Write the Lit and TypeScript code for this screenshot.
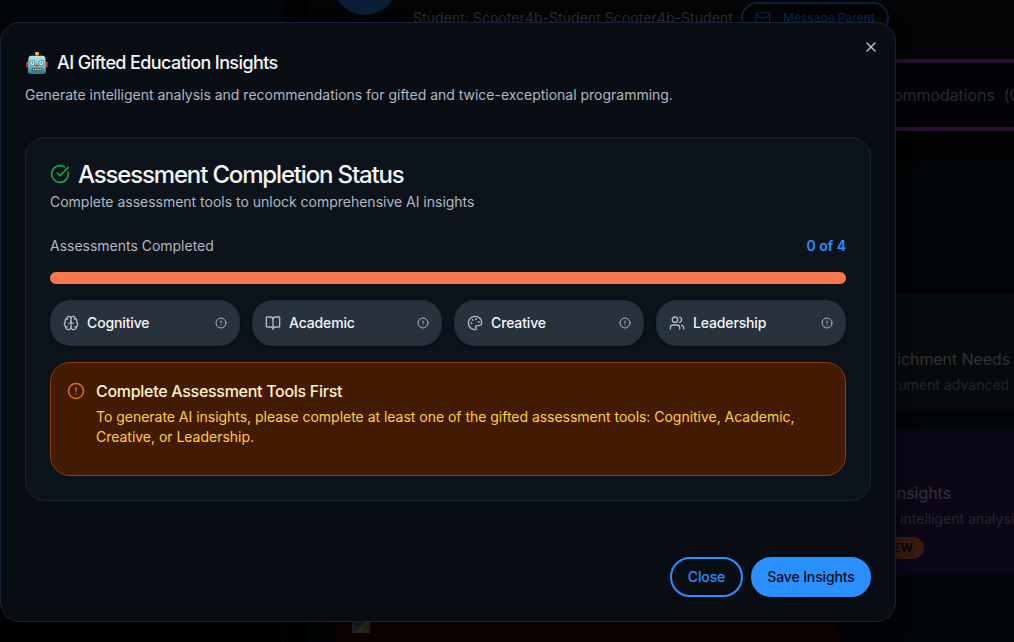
import { LitElement, html, css, svg } from "lit";
import { customElement, property } from "lit/decorators.js";

const ICONS: Record<string, unknown> = {
  check: svg`<path d="M21.801 10A10 10 0 1 1 17 3.335"/><path d="m9 11 3 3L22 4"/>`,
  brain: svg`<path d="M12 18V5"/><path d="M15 13a4.17 4.17 0 0 1-3-4 4.17 4.17 0 0 1-3 4"/><path d="M17.598 6.5A3 3 0 1 0 12 5a3 3 0 1 0-5.598 1.5"/><path d="M17.997 5.125a4 4 0 0 1 2.526 5.77"/><path d="M18 18a4 4 0 0 0 2-7.464"/><path d="M19.967 17.483A4 4 0 1 1 12 18a4 4 0 1 1-7.967-.517"/><path d="M6 18a4 4 0 0 1-2-7.464"/><path d="M6.003 5.125a4 4 0 0 0-2.526 5.77"/>`,
  book: svg`<path d="M12 7v14"/><path d="M3 18a1 1 0 0 1-1-1V4a1 1 0 0 1 1-1h5a4 4 0 0 1 4 4 4 4 0 0 1 4-4h5a1 1 0 0 1 1 1v13a1 1 0 0 1-1 1h-6a3 3 0 0 0-3 3 3 3 0 0 0-3-3z"/>`,
  palette: svg`<path d="M12 22a1 1 0 0 1 0-20 10 9 0 0 1 10 9 5 5 0 0 1-5 5h-2.25a1.75 1.75 0 0 0-1.4 2.8l.3.4a1.75 1.75 0 0 1-1.4 2.8z"/><circle cx="13.5" cy="6.5" r=".5" fill="currentColor"/><circle cx="17.5" cy="10.5" r=".5" fill="currentColor"/><circle cx="6.5" cy="12.5" r=".5" fill="currentColor"/><circle cx="8.5" cy="7.5" r=".5" fill="currentColor"/>`,
  users: svg`<path d="M16 21v-2a4 4 0 0 0-4-4H6a4 4 0 0 0-4 4v2"/><path d="M16 3.128a4 4 0 0 1 0 7.744"/><path d="M22 21v-2a4 4 0 0 0-3-3.87"/><circle cx="9" cy="7" r="4"/>`,
  alert: svg`<circle cx="12" cy="12" r="10"/><path d="M12 8v4"/><path d="M12 16h.01"/>`,
  x: svg`<path d="M18 6 6 18"/><path d="m6 6 12 12"/>`,
  mail: svg`<rect width="20" height="16" x="2" y="4" rx="2"/><path d="m22 7-8.991 5.727a2 2 0 0 1-2.009 0L2 7"/>`,
};

@customElement("ui-icon")
export class UiIcon extends LitElement {
  static styles = css`
    :host { display: block; flex: none; width: 16px; height: 16px; }
    svg { display: block; width: 100%; height: 100%; fill: none; stroke: currentColor; stroke-width: 2; stroke-linecap: round; stroke-linejoin: round; }
  `;
  @property() name = "x";
  render() {
    return html`<svg viewBox="0 0 24 24">${ICONS[this.name]}</svg>`;
  }
}

@customElement("robot-face")
export class RobotFace extends LitElement {
  static styles = css`
    :host { display: block; flex: none; width: 24px; height: 24px; }
    svg { display: block; width: 100%; height: 100%; }
  `;
  render() {
    return html`<svg viewBox="0 0 24 24">
      <defs>
        <linearGradient id="head" x1="0" y1="0" x2="0" y2="1">
          <stop offset="0" stop-color="#c4e2e6"/><stop offset=".5" stop-color="#8fc3cb"/><stop offset="1" stop-color="#1f7a88"/>
        </linearGradient>
      </defs>
      <path d="M10.600 3h2.800v3h-2.800z" fill="#7d3a5c"/>
      <rect x="10" y="1" width="4" height="2.900" rx="1" fill="#f3b62c"/>
      <rect x="1" y="10.500" width="3" height="6" rx="1.200" fill="#b8322f"/>
      <rect x="19.800" y="10.500" width="3" height="6" rx="1.200" fill="#b8322f"/>
      <path d="M6.200 4.700h11.400q2.600 0 2.800 2.800l.3 9 .3 3.700q0 2.700-3 2.700H5.800q-3 0-3-2.700l.3-3.700.3-9q.2-2.800 2.800-2.800z" fill="url(#head)"/>
      <circle cx="7.400" cy="11.900" r="3" fill="#25a3bb"/><circle cx="16.300" cy="11.900" r="3" fill="#25a3bb"/>
      <circle cx="7.400" cy="11.900" r="2" fill="#e9ffff"/><circle cx="16.300" cy="11.900" r="2" fill="#e9ffff"/>
      <circle cx="7.400" cy="11.900" r=".8" fill="#35525d"/><circle cx="16.300" cy="11.900" r=".8" fill="#35525d"/>
      <path d="m11.900 12.500 1.800 3.200h-3.600z" fill="#d0403a"/>
      <rect x="6.800" y="17" width="10.200" height="3.200" rx="1.400" fill="#29505a"/>
      <path d="M7.900 18.600h8.200" stroke="#d7e2e2" stroke-width="1.500" stroke-dasharray="1.500 .7"/>
    </svg>`;
  }
}

@customElement("student-page")
export class StudentPage extends LitElement {
  static styles = css`
    :host { display: grid; grid-template-columns: 283px 25px 1fr; height: 642px; overflow: hidden; background: #010203; color: #292b2d; font-size: 14px; letter-spacing: 0; }
    .side { background: linear-gradient(#020608, #010203 60%); border-right: 1px solid #07090b; }
    .main { border-left: 1px solid #050708; background: #020406; overflow: hidden; min-width: 0; }
    .head { display: flex; height: 59px; padding-left: 24px; gap: 16px; }
    .avatar { flex: none; width: 64px; height: 64px; margin-top: -49px; border-radius: 50%; background: #0a1e35; }
    .student { margin-top: 8px; line-height: 20px; letter-spacing: 0.05px; white-space: nowrap; width: 320px; margin-right: -8px; color: #2a2c2e; }
    .message { display: flex; align-items: center; gap: 12px; box-sizing: border-box; flex: none; margin-top: 2px; width: 148px; height: 32px; padding: 0 12px; border: 2px solid #08213e; border-radius: 16px; color: #082342; font-size: 12px; font-weight: 500; letter-spacing: -0.07px; white-space: nowrap; }
    .tabs { box-sizing: border-box; height: 72px; border: 4px solid; border-image: linear-gradient(90deg, #180e38, #291030) 1; border-left: 0; border-right: 0; padding: 21px 0 0 555px; font-size: 16px; line-height: 22px; white-space: pre; background: #020306; letter-spacing: -0.08px; }
    .spacer { height: 32px; background: #010202; }
    .panel { display: grid; grid-template-columns: 505px 505px; column-gap: 18px; row-gap: 18px; grid-template-rows: 112px 117px 146px 80px; border-top: 1px solid #06090a; padding: 0 25px; background: #020507; margin-bottom: -10px; }
    .card { box-sizing: border-box; background: #070a0c; overflow: hidden; white-space: nowrap; }
    .insight { background: #0b0717; color: #35323a; padding: 52px 0 0 16px; }
    .enrich { padding: 53px 0 0 15px; color: #303335; }
    .name { font-size: 16px; line-height: 24px; letter-spacing: -0.07px; }
    .desc { margin-top: 4px; line-height: 20px; color: #232629; }
    .badge { display: inline-block; box-sizing: border-box; margin-top: 8px; margin-left: 4px; height: 22px; width: 47px; padding-right: 11px; border-radius: 11px; text-align: right; background: #361a11; color: #080402; font-size: 12px; font-weight: 600; line-height: 22px; }
    .note { background: #0d0302; padding: 20px 18px; }
    .memo { display: block; width: 18px; height: 20px; }
  `;
  render() {
    return html`
      <div class="side"></div><div></div>
      <div class="main">
        <div class="head">
          <div class="avatar"></div>
          <div class="student">Student: Scooter4b-Student Scooter4b-Student</div>
          <div class="message"><ui-icon name="mail"></ui-icon>Message Parent</div>
        </div>
        <div class="tabs">Accommodations  (0)</div>
        <div class="spacer"></div>
        <div class="panel">
          <div></div><div></div>
          <div class="card"></div>
          <div class="card enrich"><div class="name">Enrichment Needs</div><div class="desc">Document advanced needs</div></div>
          <div class="card"></div>
          <div class="card insight"><div class="name">AI Insights</div><div class="desc">Get intelligent analysis</div><div class="badge">NEW</div></div>
          <div class="card note"><svg class="memo" viewBox="0 0 18 20"><rect width="18" height="20" fill="#292a2a"/><path d="M3 8h7M3 12h4M3 16h3" stroke="#171818"/><path d="M5 19 15 8l3 2L8 19z" fill="#4b3a0d"/></svg></div>
        </div>
      </div>`;
  }
}

@customElement("app-root")
export class AppRoot extends LitElement {
  static styles = css`
    :host { display: block; position: relative; width: 1014px; height: 642px; overflow: hidden; font-family: Inter, "Liberation Sans", sans-serif; font-size: 14px; line-height: 20px; letter-spacing: -0.012px; color: #b0b8c1; }
    .dialog { position: absolute; left: 0; top: 22px; box-sizing: border-box; width: 896px; height: 600px; padding: 24px; border: 1px solid #152638; border-radius: 20px; background: #080d14; box-shadow: 0 8px 16px #0008; display: flex; flex-direction: column; }
    .close { position: absolute; right: 16px; top: 16px; color: #c0c3c7; }
    .heading { display: flex; align-items: center; gap: 8px; height: 32px; color: #f3f5f7; font-size: 18px; font-weight: 500; letter-spacing: -0.6px; white-space: nowrap; }
    .intro { margin-top: 6px; white-space: nowrap; }
    .status { box-sizing: border-box; height: 364px; margin-top: 32px; padding: 24px; border: 1px solid #152638; border-radius: 20px; background: #0c131b; }
    .title { display: flex; align-items: center; gap: 8px; height: 24px; color: #f3f5f7; font-size: 24px; font-weight: 500; letter-spacing: -1.16px; white-space: nowrap; }
    .text { position: relative; top: 1px; }
    .done { width: 20px; height: 20px; color: #16a34a; }
    .sub { margin-top: 6px; }
    .count { display: flex; justify-content: space-between; margin-top: 24px; }
    .total { color: #2b90ff; font-weight: 600; letter-spacing: 0; }
    .bar { height: 12px; margin-top: 16px; border-radius: 6px; background: #fa764e; }
    .tools { display: grid; grid-template-columns: repeat(4, 1fr); gap: 12px; margin-top: 16px; }
    .tool { display: flex; align-items: center; box-sizing: border-box; height: 46px; padding: 0 12px; border: 1px solid #1b2c3e; border-radius: 20px; background: #28323d; box-shadow: 0 1px 3px #0006; }
    .label { flex: 1; margin-left: 8px; color: #f3f5f7; font-weight: 500; letter-spacing: -0.14px; }
    .mark { width: 12px; height: 12px; }
    .warning { display: flex; gap: 11.4px; box-sizing: border-box; height: 114px; margin-top: 16px; padding: 16px; border: 1px solid #973c08; border-radius: 20px; background: #431a02; color: #ffd03c; letter-spacing: -0.022px; }
    .caution { width: 18px; height: 18px; margin: 3px 0 0 -0.4px; color: #d97706; }
    .first { margin-bottom: 4px; color: #fef3c6; font-size: 16px; font-weight: 500; line-height: 24px; letter-spacing: -0.29px; }
    .actions { display: flex; justify-content: flex-end; gap: 8px; margin-top: auto; }
    .button { box-sizing: border-box; height: 40px; border: 2px solid #2b90ff; border-radius: 20px; background: #2b90ff; color: #080d14; font: inherit; font-weight: 500; letter-spacing: -0.12px; padding: 0; width: 120px; box-shadow: 0 2px 4px #0008; white-space: nowrap; }
    .outline { width: 73px; background: transparent; color: #2b90ff; box-shadow: none; }
  `;
  private tools = [["brain", "Cognitive"], ["book", "Academic"], ["palette", "Creative"], ["users", "Leadership"]];
  render() {
    return html`
      <student-page></student-page>
      <div class="dialog" role="dialog">
        <ui-icon class="close" name="x"></ui-icon>
        <div class="heading"><robot-face></robot-face>AI Gifted Education Insights</div>
        <div class="intro">Generate intelligent analysis and recommendations for gifted and twice-exceptional programming.</div>
        <section class="status">
          <div class="title"><ui-icon class="done" name="check"></ui-icon><span class="text">Assessment Completion Status</span></div>
          <div class="sub">Complete assessment tools to unlock comprehensive AI insights</div>
          <div class="count"><span>Assessments Completed</span><span class="total">0 of 4</span></div>
          <div class="bar"></div>
          <div class="tools">
            ${this.tools.map(([icon, label]) => html`<div class="tool"><ui-icon name=${icon}></ui-icon><span class="label">${label}</span><ui-icon class="mark" name="alert"></ui-icon></div>`)}
          </div>
          <div class="warning">
            <ui-icon class="caution" name="alert"></ui-icon>
            <div><div class="first">Complete Assessment Tools First</div><div>To generate AI insights, please complete at least one of the gifted assessment tools: Cognitive, Academic, Creative, or Leadership.</div></div>
          </div>
        </section>
        <div class="actions"><button class="button outline">Close</button><button class="button">Save Insights</button></div>
      </div>`;
  }
}
